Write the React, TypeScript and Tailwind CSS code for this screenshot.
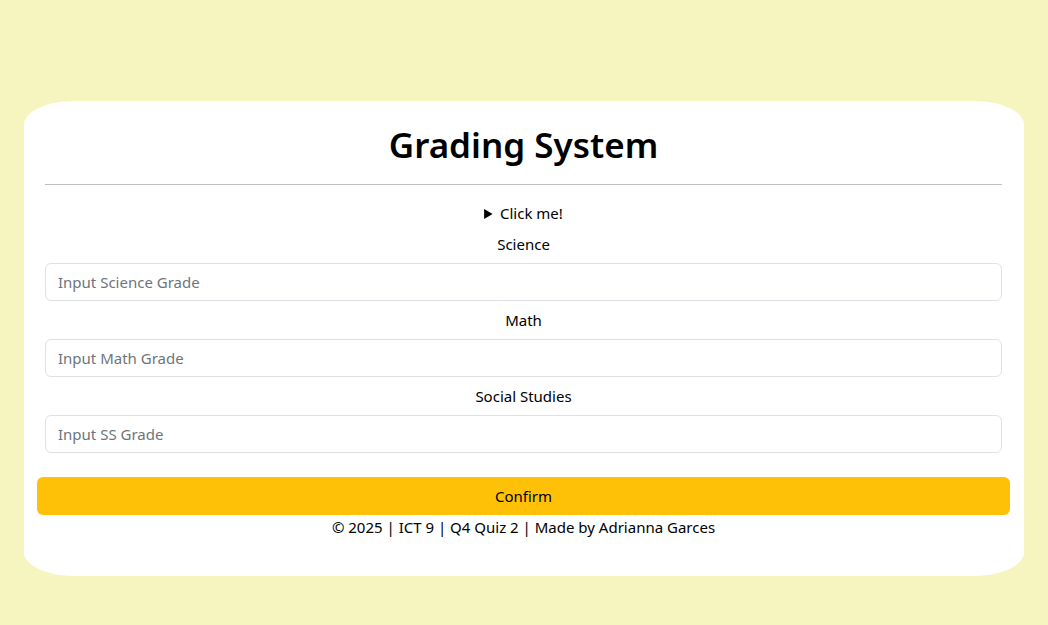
export default function App() {
  const fields = [
    { label: "Science", placeholder: "Input Science Grade" },
    { label: "Math", placeholder: "Input Math Grade" },
    { label: "Social Studies", placeholder: "Input SS Grade" },
  ];

  return (
    <div className="min-h-[625px] bg-[#f6f5c0] px-6 pt-[101px] pb-[49px] font-['Noto_Sans',sans-serif] text-[15px] text-black">
      <div className="rounded-[5%] bg-white pt-5 pr-[22px] pb-[37px] pl-[21px]">
        <h1 className="text-center text-[35px] leading-[48px] font-semibold">Grading System</h1>
        <hr className="mt-[15px] border-t border-[#bfbfbf]" />

        <details className="mt-4 text-center">
          <summary className="cursor-pointer leading-6">Click me!</summary>
        </details>

        {fields.map((f) => (
          <div key={f.label} className="mt-[7px]">
            <label className="block text-center leading-6">{f.label}</label>
            <input
              type="text"
              placeholder={f.placeholder}
              className="mt-[7px] block h-[38px] w-full rounded-md border border-[#dee2e6] px-3 text-[15px] placeholder:text-[#6c757d] focus:outline-none"
            />
          </div>
        ))}

        <button
          type="button"
          className="-mx-2 mt-6 block h-[38px] w-[calc(100%+16px)] rounded-md bg-[#ffc107] text-center"
        >
          Confirm
        </button>
        <p className="text-center leading-6">© 2025 | ICT 9 | Q4 Quiz 2 | Made by Adrianna Garces</p>
      </div>
    </div>
  );
}
